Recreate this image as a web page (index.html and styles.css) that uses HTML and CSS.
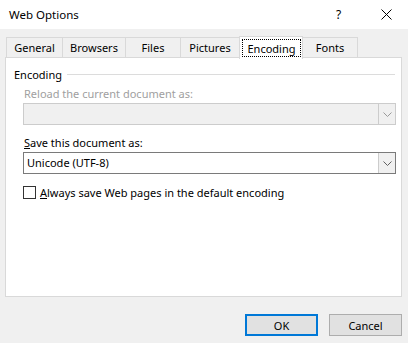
FILE: index.html
```html
<!DOCTYPE html>
<html>
<head>
<meta charset="utf-8">
<link rel="stylesheet" href="styles.css">
</head>
<body>
<div class="dialog">
  <div class="titlebar">
    <span class="title">Web Options</span>
    <span class="help">?</span>
    <span class="close"><svg width="11" height="11" viewBox="0 0 11 11"><path d="M0.5 0.5 L10.5 10.5 M10.5 0.5 L0.5 10.5" stroke="#000" stroke-width="1" fill="none"/></svg></span>
  </div>
  <div class="body">
    <div class="tabs">
      <div class="tab t-general">General</div>
      <div class="tab t-browsers">Browsers</div>
      <div class="tab t-files">Files</div>
      <div class="tab t-pictures">Pictures</div>
      <div class="tab tab-active t-encoding"><span class="focus">Encoding</span></div>
      <div class="tab t-fonts">Fonts</div>
    </div>
    <div class="panel">
      <div class="group-head">
        <span class="group-label">Encoding</span>
        <span class="group-line"></span>
      </div>
      <div class="field-label disabled">Reload the current document as:</div>
      <div class="combo combo-disabled">
        <span class="combo-text"></span>
        <span class="combo-btn"><svg width="9" height="5" viewBox="0 0 9 5"><path d="M0.5 0.5 L4.5 4.5 L8.5 0.5" stroke="#9a9a9a" fill="none"/></svg></span>
      </div>
      <div class="field-label second"><u>S</u>ave this document as:</div>
      <div class="combo">
        <span class="combo-text">Unicode (UTF-8)</span>
        <span class="combo-btn"><svg width="9" height="5" viewBox="0 0 9 5"><path d="M0.5 0.5 L4.5 4.5 L8.5 0.5" stroke="#606060" fill="none"/></svg></span>
      </div>
      <label class="check-row">
        <span class="checkbox"></span>
        <span class="check-label"><u>A</u>lways save Web pages in the default encoding</span>
      </label>
    </div>
    <div class="buttons">
      <button class="btn btn-default">OK</button>
      <button class="btn">Cancel</button>
    </div>
  </div>
</div>
</body>
</html>
```
FILE: styles.css
```css
* { box-sizing: border-box; }
html, body { margin: 0; padding: 0; }
body {
  width: 408px;
  height: 343px;
  background: #f0f0f0;
  font-family: "Noto Sans", "Open Sans", sans-serif;
  font-size: 11px;
  color: #000;
  overflow: hidden;
}
.dialog { width: 408px; height: 343px; display: flex; flex-direction: column; }
.titlebar {
  height: 29px;
  background: #fff;
  display: flex;
  align-items: center;
  padding-left: 9px;
}
.title { font-size: 11.5px; flex: 1; }
.help { width: 12px; margin-right: 33px; font-size: 12px; }
.close { width: 11px; height: 11px; margin-right: 16px; display: flex; }
.body { padding: 7px 6px 0 5px; flex: 1; display: flex; flex-direction: column; }
.tabs { display: flex; height: 21px; padding-left: 1px; align-items: flex-end; position: relative; z-index: 1; }
.tab {
  height: 20px;
  border: 1px solid #d9d9d9;
  border-bottom: none;
  border-right: none;
  display: flex;
  align-items: center;
  justify-content: center;
  background: #f0f0f0;
  line-height: 1;
}
.t-general { width: 56px; }
.t-browsers { width: 63px; }
.t-files { width: 55px; }
.t-pictures { width: 59px; }
.t-encoding { width: 64px; }
.t-fonts { width: 55px; border-right: 1px solid #d9d9d9; border-left: none; }
.tab-active {
  height: 23px;
  background: #fff;
  border: 1px solid #d9d9d9;
  border-bottom: none;
  margin-bottom: -2px;
  padding: 2px 1px 2px 2px;
  align-items: stretch;
}
.focus {
  flex: 1;
  border: 1px dotted #000;
  display: flex;
  align-items: center;
  justify-content: center;
}
.panel {
  height: 240px;
  width: 397px;
  background: #fff;
  border: 1px solid #d9d9d9;
  padding: 9px 6px 0 17px;
  display: flex;
  flex-direction: column;
}
.group-head { display: flex; align-items: center; margin-left: -9px; height: 14px; }
.group-label { margin-right: 5px; }
.group-line { flex: 1; height: 1px; background: #dcdcdc; }
.field-label { margin-top: 6px; height: 14px; line-height: 14px; padding-left: 1px; }
.field-label.disabled { color: #a0a0a0; }
.field-label.second { margin-top: 11px; }
.combo {
  margin-top: 2px;
  width: 373px;
  height: 22px;
  border: 1px solid #7a7a7a;
  background: #fff;
  display: flex;
  align-items: stretch;
}
.combo-disabled { background: #f0f0f0; border-color: #cccccc; }
.combo-text { flex: 1; padding-left: 3px; line-height: 20px; }
.combo-btn {
  width: 17px;
  border-left: 1px solid #cccccc;
  display: flex;
  align-items: center;
  justify-content: center;
  background: #f0f0f0;
}
.check-row { display: flex; align-items: center; margin-top: 11px; height: 14px; }
.checkbox { width: 13px; height: 13px; border: 1px solid #333; background: #fff; margin-right: 4px; }
.buttons { display: flex; justify-content: flex-end; gap: 11px; margin-top: 17px; }
.btn {
  width: 73px;
  height: 22px;
  font-family: inherit;
  font-size: 11px;
  background: #e1e1e1;
  border: 1px solid #adadad;
  padding: 0;
  color: #000;
}
.btn-default { border: 2px solid #0078d7; }
```
